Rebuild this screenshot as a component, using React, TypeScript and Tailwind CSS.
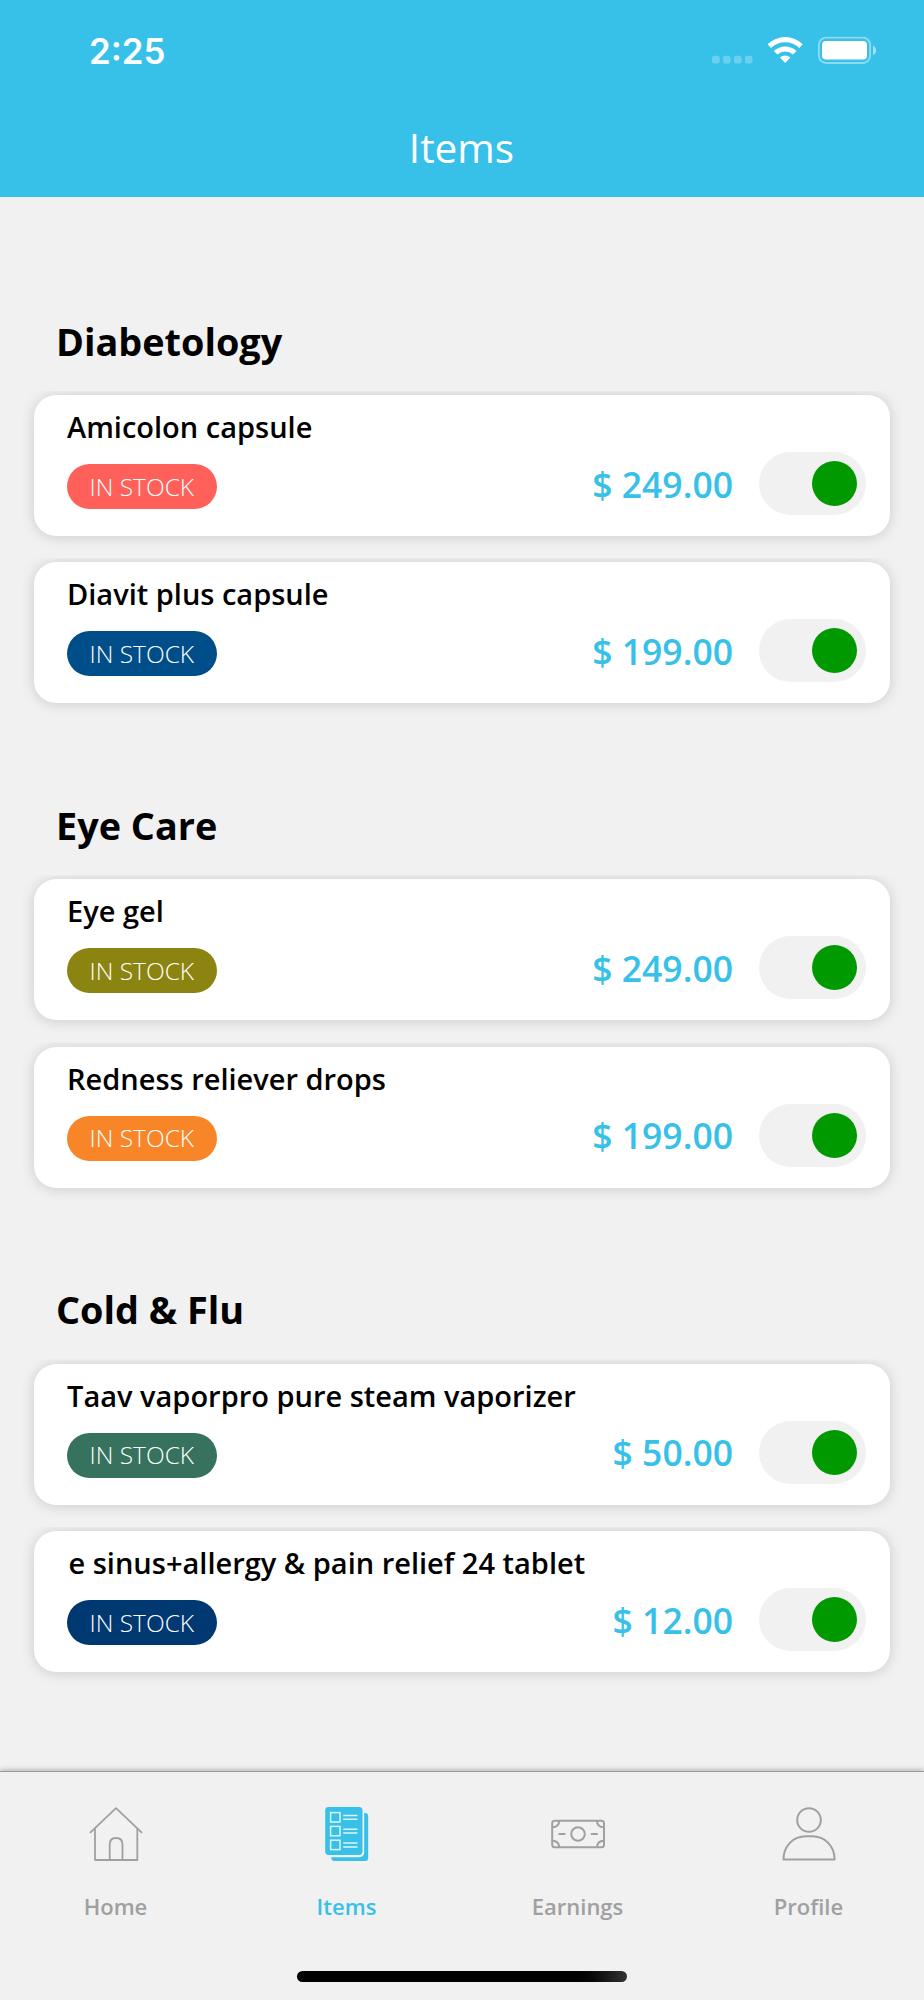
import type { ReactNode } from 'react';

type Item = { name: string; price: string; badge: string; clipped?: boolean };
type Section = { title: string; items: Item[] };

const sections: Section[] = [
  {
    title: 'Diabetology',
    items: [
      { name: 'Amicolon capsule', price: '$ 249.00', badge: 'bg-[#ff6059]' },
      { name: 'Diavit plus capsule', price: '$ 199.00', badge: 'bg-[#004e89]' },
    ],
  },
  {
    title: 'Eye Care',
    items: [
      { name: 'Eye gel', price: '$ 249.00', badge: 'bg-[#8c8410]' },
      { name: 'Redness reliever drops', price: '$ 199.00', badge: 'bg-[#f88628]' },
    ],
  },
  {
    title: 'Cold & Flu',
    items: [
      { name: 'Taav vaporpro pure steam vaporizer', price: '$ 50.00', badge: 'bg-[#36725d]' },
      { name: 'e sinus+allergy & pain relief 24 tablet', price: '$ 12.00', badge: 'bg-[#003872]', clipped: true },
    ],
  },
];

function StatusBar() {
  return (
    <div className="flex h-[101px] items-center justify-between pr-[46px] pl-[89px]">
      <span className="font-['Inter'] text-[34.8px] leading-[42px] font-semibold">2:25</span>
      <svg className="mt-[1px]" width="166" height="30" viewBox="0 0 166 30" fill="none">
        <g fill="#fff" fillOpacity="0.25">
          <rect x="0" y="19.8" width="7.6" height="7.6" rx="2.2" />
          <rect x="11" y="19.8" width="7.6" height="7.6" rx="2.2" />
          <rect x="22" y="19.8" width="7.6" height="7.6" rx="2.2" />
          <rect x="33" y="19.8" width="7.6" height="7.6" rx="2.2" />
        </g>
        <g fill="#fff">
          <path d="M55.6 8.2 A25.4 25.4 0 0 1 90.8 8.2 L87.4 12 A20.6 20.6 0 0 0 59 12 Z" />
          <path d="M61.9 15 A16.4 16.4 0 0 1 84.5 15 L81 18.5 A11.5 11.5 0 0 0 65.4 18.5 Z" />
          <path d="M68 21.6 A7.6 7.6 0 0 1 78.4 21.6 L73.2 27 Z" />
        </g>
        <rect x="106.9" y="1.6" width="51.2" height="25.4" rx="7.2" stroke="#fff" strokeOpacity="0.42" strokeWidth="1.9" />
        <rect x="110" y="5" width="45" height="18.6" rx="4" fill="#fff" />
        <path d="M161 9.8 C165.2 11.4 165.2 17.6 161 19.2 Z" fill="#fff" fillOpacity="0.5" />
      </svg>
    </div>
  );
}

function Toggle() {
  return (
    <div className="flex h-[63px] w-[107px] items-center justify-end rounded-full bg-[#f1f1f1] pr-[9px]">
      <div className="size-[45px] rounded-full bg-[#009900]" />
    </div>
  );
}

function ItemCard({ item }: { item: Item }) {
  return (
    <div className="h-[141px] rounded-[22px] bg-white pt-[12px] pr-[24px] pl-[33px] shadow-[0_1px_14px_rgba(0,0,0,0.16)] [clip-path:inset(-4px_-24px_-24px_-24px)]">
      <div className={item.clipped ? 'pl-[1.5px]' : ''}>
        <p className="text-[29px] leading-[40px] font-semibold whitespace-nowrap">{item.name}</p>
      </div>
      <div className="flex items-start justify-between pt-[5.2px]">
        <span className={`mt-[12px] flex h-[45px] w-[149.6px] items-center justify-center rounded-full text-[24.5px] leading-[34px] font-light text-white ${item.badge}`}>
          IN STOCK
        </span>
        <div className="flex items-center gap-[26px]">
          <span className="text-[35.5px] leading-[50px] font-semibold text-[#37c1e8]">{item.price}</span>
          <Toggle />
        </div>
      </div>
    </div>
  );
}

function HomeIcon() {
  return (
    <svg width="54" height="54" viewBox="0 0 54 54" fill="none" stroke="#a0a0a0" strokeWidth="1.8" strokeLinejoin="round">
      <path d="M1 25.8 L27 1.2 L53 25.8" />
      <path d="M6 21.5 V53 H48.3 V21.5" />
      <path d="M20.7 53 V37.5 C20.7 33 23.2 31 27 31 C30.8 31 33.5 33 33.5 37.5 V53" />
    </svg>
  );
}

function ItemsIcon() {
  return (
    <svg width="54" height="54" viewBox="-4.7 0 54 54" fill="none">
      <path d="M39.5 6 H40.5 Q43.5 6 43.5 9 V51 Q43.5 54 40.5 54 H10 Q6.5 54 6.5 50.2 H34.5 Q39.5 50.2 39.5 45 Z" fill="#37c1e8" />
      <rect x="0.5" y="0" width="37.3" height="48" rx="3.4" fill="#37c1e8" />
      {[5.6, 19.4, 33.2].map((y) => (
        <g key={y} stroke="#dff3f9" strokeWidth="1.5">
          <rect x="5.9" y={y} width="9.4" height="9.4" />
          <path d={`M18.5 ${y + 2.9} H32.8 M18.5 ${y + 6.7} H32.8`} />
        </g>
      ))}
    </svg>
  );
}

function EarningsIcon() {
  return (
    <svg width="54" height="54" viewBox="0 0 54 54" fill="none" stroke="#a0a0a0" strokeWidth="2">
      <rect x="1.2" y="13.7" width="51.8" height="26.6" rx="2.6" />
      <circle cx="27" cy="27" r="6.8" />
      <path d="M8.2 27 H13.6 M40.6 27 H46" strokeLinecap="round" />
      <path d="M8.2 13.7 Q8.2 20 1.2 20.3 M46 13.7 Q46 20 53 20.3 M8.2 40.3 Q8.2 34 1.2 33.7 M46 40.3 Q46 34 53 33.7" />
    </svg>
  );
}

function ProfileIcon() {
  return (
    <svg width="54" height="54" viewBox="0 0 54 54" fill="none" stroke="#a0a0a0" strokeWidth="2" strokeLinejoin="round">
      <circle cx="27" cy="13" r="11.8" />
      <path d="M1.5 52.6 C1.5 39 11 29.3 24 29.3 H30 C43 29.3 52.6 39 52.6 52.6 Z" />
    </svg>
  );
}

function Tab({ label, icon, active }: { label: string; icon: ReactNode; active?: boolean }) {
  return (
    <div className={`flex flex-col items-center gap-[30px] pt-[35px] text-[22px] leading-[30px] font-semibold ${active ? 'text-[#37c1e8]' : 'text-[#a0a0a0]'}`}>
      {icon}
      <span>{label}</span>
    </div>
  );
}

export default function App() {
  return (
    <div className="flex h-[2000px] w-[924px] flex-col overflow-hidden bg-[#f1f1f1] font-['Open_Sans',sans-serif] text-black">
      <header className="h-[196.5px] shrink-0 bg-[#37c1e8] text-white">
        <StatusBar />
        <h1 className="pt-[19px] pr-[1px] text-center text-[40.5px] leading-[56px] font-normal">Items</h1>
      </header>
      <main className="flex h-[1574.5px] shrink-0 flex-col gap-[94px] px-[34px] pt-[116px]">
        {sections.map((section) => (
          <section key={section.title} className="flex h-[390.3px] shrink-0 flex-col">
            <h2 className="h-[82.5px] shrink-0 pt-[3px] pl-[22px] text-[37.8px] leading-[52px] font-bold">{section.title}</h2>
            <div className="flex flex-col gap-[26.3px]">
              {section.items.map((item) => (
                <ItemCard key={item.name} item={item} />
              ))}
            </div>
          </section>
        ))}
      </main>
      <nav className="flex grow flex-col items-center border-t border-[#9b9b9b] bg-[#f1f1f1] shadow-[0_-1px_5px_rgba(0,0,0,0.28)]">
        <div className="grid h-[199px] w-full grid-cols-4">
          <Tab label="Home" icon={<HomeIcon />} />
          <Tab label="Items" icon={<ItemsIcon />} active />
          <Tab label="Earnings" icon={<EarningsIcon />} />
          <Tab label="Profile" icon={<ProfileIcon />} />
        </div>
        <div className="h-[11px] w-[330px] rounded-full bg-linear-to-r from-black from-82% to-[#333333]" />
      </nav>
    </div>
  );
}
